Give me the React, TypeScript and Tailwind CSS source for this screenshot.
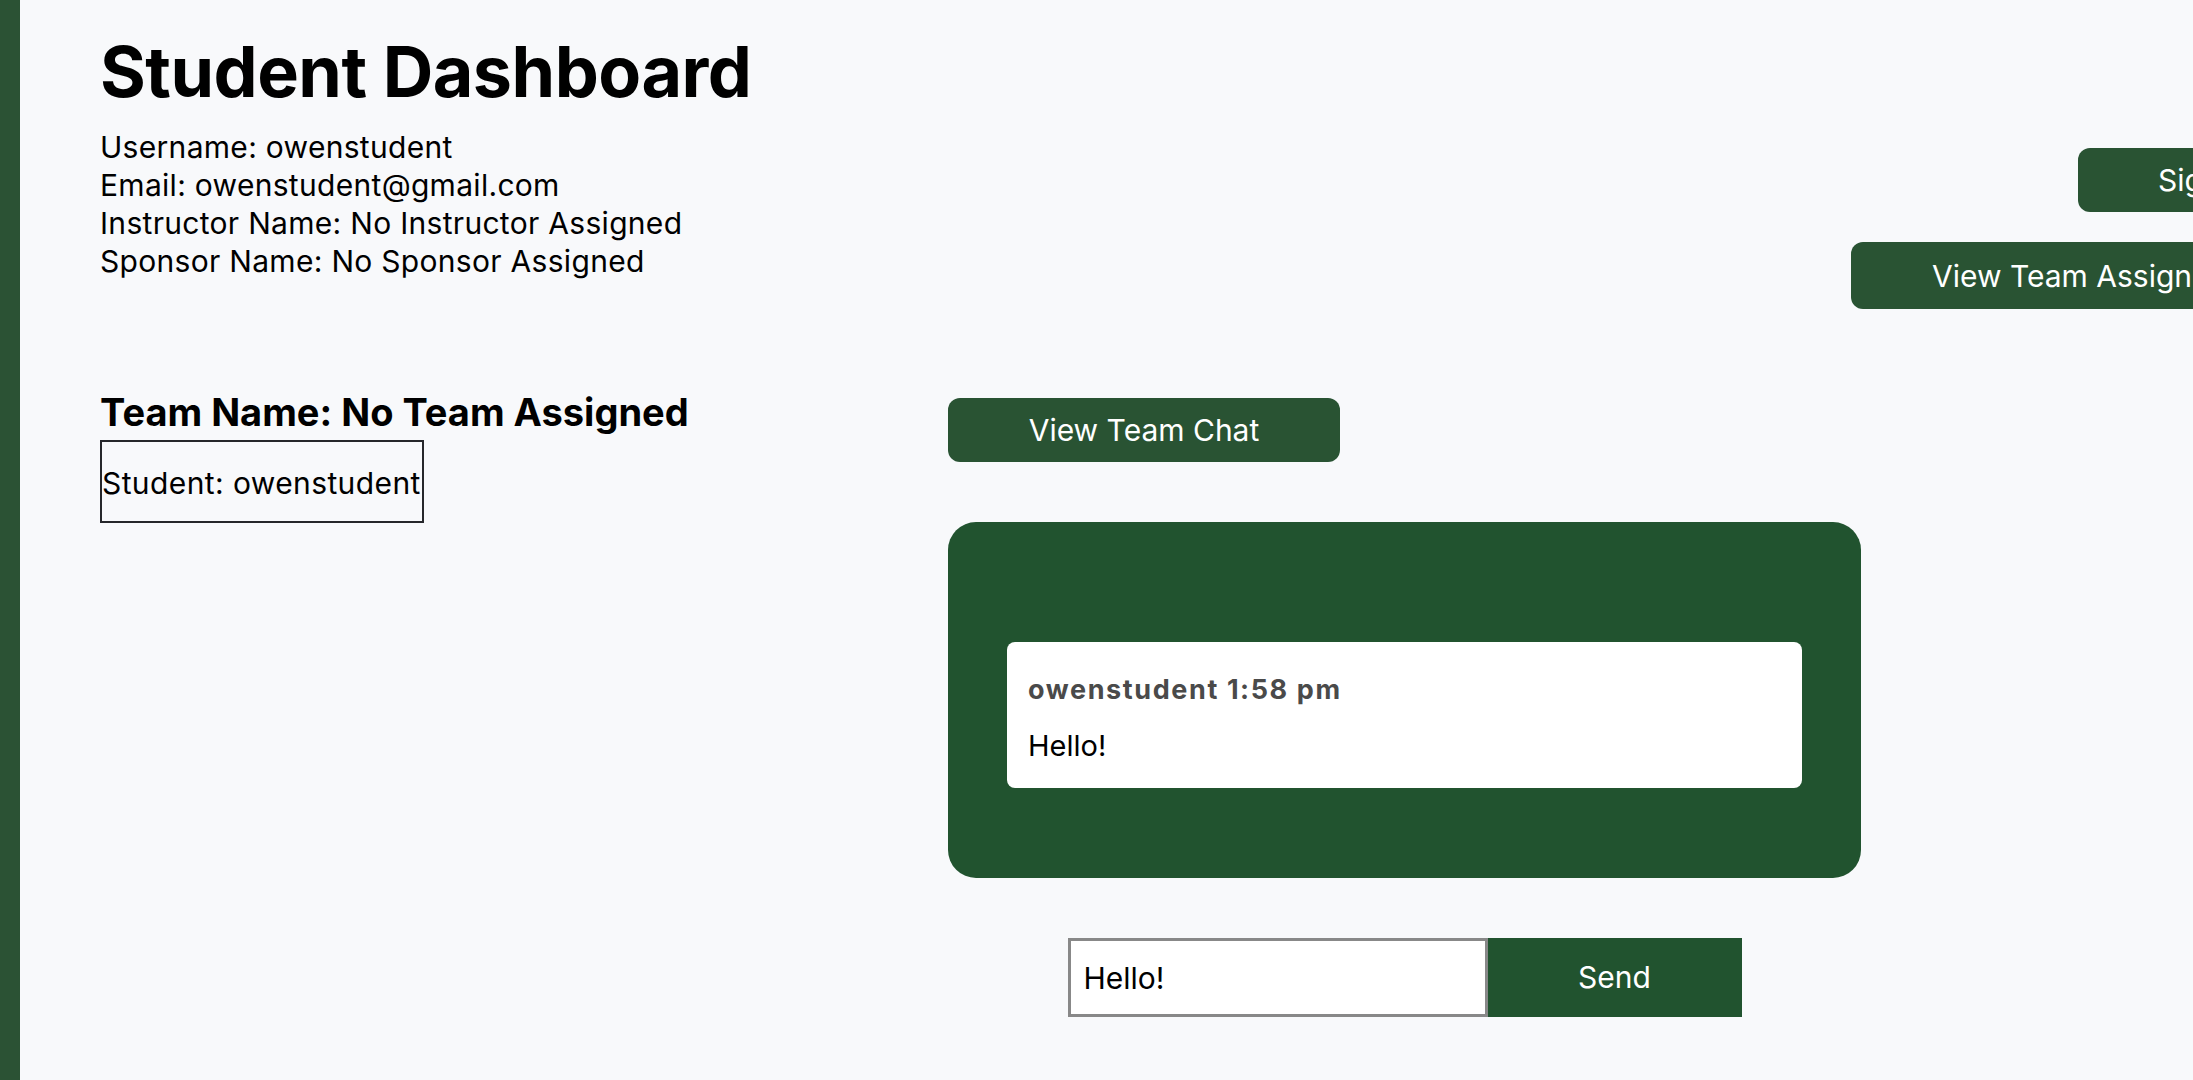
import * as React from "react";

// ─── Small pieces ─────────────────────────────────────────────────────────────

const GreenButton = ({ children, className = "" }: { children: React.ReactNode; className?: string }) => (
  <button
    className={
      "flex shrink-0 items-center justify-center whitespace-nowrap rounded-[12px] bg-[#295333] text-[30px] leading-none text-white " +
      className
    }
  >
    {children}
  </button>
);

const InfoLine = ({ children }: { children: React.ReactNode }) => (
  <p className="text-[30px] leading-[38px] tracking-[0.3px] text-black">{children}</p>
);

// ─── Main ─────────────────────────────────────────────────────────────────────

export default function App() {
  const [draft, setDraft] = React.useState("Hello!");

  return (
    <div className="flex h-screen w-screen overflow-hidden bg-[#f8f9fb] font-['Inter','Liberation_Sans',sans-serif]">
      {/* left accent bar */}
      <div className="h-full w-[20px] shrink-0 bg-[#2b5234]" />

      <main className="flex flex-col pl-[80px] pt-[37px]">
        {/* ── Header: profile + actions ── */}
        <div className="flex items-start">
          <div className="w-[1751px] shrink-0">
            <h1 className="text-[70px] font-bold leading-[70px] tracking-[-0.5px] text-black">Student Dashboard</h1>
            <div className="mt-[21px]">
              <InfoLine>Username: owenstudent</InfoLine>
              <InfoLine>Email: owenstudent@gmail.com</InfoLine>
              <InfoLine>Instructor Name: No Instructor Assigned</InfoLine>
              <InfoLine>Sponsor Name: No Sponsor Assigned</InfoLine>
            </div>
          </div>

          <div className="mt-[111px] flex flex-col items-start gap-[30px]">
            <GreenButton className="ml-[227px] h-[64px] px-[80px]">Sign Out</GreenButton>
            <GreenButton className="h-[67px] px-[81px]">View Team Assignments</GreenButton>
          </div>
        </div>

        {/* ── Team + chat ── */}
        <div className="mt-[84px] flex items-start">
          <div className="w-[848px] shrink-0">
            <h2 className="text-[38px] font-bold leading-[38px] text-black">Team Name: No Team Assigned</h2>
            <div className="mt-[9px] w-fit border-2 border-[#26272b] pb-[19px] pt-[22px]">
              <p className="pr-[1px] text-[30px] leading-[38px] tracking-[0.4px] text-black">Student: owenstudent</p>
            </div>
          </div>

          <div className="mt-[5px] flex w-[913px] flex-col items-start">
            <GreenButton className="h-[64px] w-[392px]">View Team Chat</GreenButton>

            <div className="mt-[60px] w-full rounded-[28px] bg-[#21532f] px-[59px] pb-[90px] pt-[120px]">
              <div className="rounded-[8px] bg-white px-[21px] pb-[23px] pt-[32px]">
                <p className="text-[27px] font-bold leading-[32px] tracking-[1.6px] text-[#4a4a4a]">owenstudent 1:58 pm</p>
                <p className="mt-[21px] text-[29px] leading-[38px] text-black">Hello!</p>
              </div>
            </div>

            <div className="mt-[60px] flex w-full justify-center">
              <input
                value={draft}
                onChange={(e) => setDraft(e.target.value)}
                className="h-[79px] w-[420px] border-[3px] border-[#888] bg-white pl-[13px] text-[30px] text-black outline-none"
              />
              <button className="h-[79px] w-[254px] bg-[#21532f] text-[30px] text-white">Send</button>
            </div>
          </div>
        </div>
      </main>
    </div>
  );
}
